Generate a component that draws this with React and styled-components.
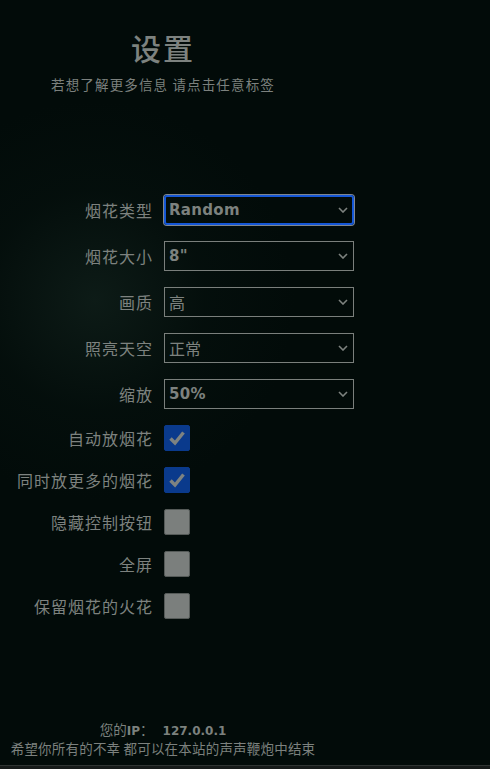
import React from "react";
import styled, { createGlobalStyle, css } from "styled-components";

const GlobalStyle = createGlobalStyle`
  html, body {
    margin: 0;
    padding: 0;
    background: #020b09;
  }
  body {
    font-family: "Noto Sans CJK SC", "Noto Sans", sans-serif;
    color: #7c817e;
  }
`;

const Page = styled.div`
  height: 765px;
  display: flex;
  flex-direction: column;
  background:
    radial-gradient(circle at 95px 300px, rgba(22, 40, 34, 0.55) 0, rgba(10, 24, 20, 0.25) 110px, rgba(2, 11, 9, 0) 200px),
    #020b09;
`;

const Header = styled.header`
  width: 326px;
  text-align: center;
  padding-top: 26px;
`;

const Title = styled.h1`
  margin: 0;
  font-size: 30px;
  line-height: 42px;
  font-weight: 500;
  letter-spacing: 2px;
  color: #7d827f;
`;

const Subtitle = styled.p`
  margin: 6px 0 0;
  font-size: 13.5px;
  line-height: 20px;
  letter-spacing: 1.15px;
  color: #7c817e;
`;

const Form = styled.div`
  display: flex;
  flex-direction: column;
  gap: 16px;
  margin-top: 101px;
`;

const Row = styled.div`
  display: grid;
  grid-template-columns: 153px 190px;
  column-gap: 11px;
  align-items: center;
`;

const Label = styled.label`
  text-align: right;
  font-size: 16px;
  letter-spacing: 1px;
  color: #7d827f;
  white-space: nowrap;
`;

const SelectWrap = styled.div`
  position: relative;
  width: 190px;
  height: 30px;
`;

const Select = styled.select`
  appearance: none;
  -webkit-appearance: none;
  box-sizing: border-box;
  width: 100%;
  height: 100%;
  margin: 0;
  padding: 0 22px 0 4px;
  background: transparent;
  color: #7d827f;
  border: 1px solid #7a7f7c;
  border-radius: 0;
  font-family: ${(p) => (p.$latin ? '"DejaVu Sans", "Noto Sans CJK SC", sans-serif' : '"Noto Sans CJK SC", sans-serif')};
  font-weight: ${(p) => (p.$latin ? 700 : 400)};
  font-size: ${(p) => (p.$latin ? "15px" : "16px")};
  letter-spacing: ${(p) => (p.$latin ? "0.3px" : "0")};
  outline: none;
  ${(p) =>
    p.$focused &&
    css`
      border: 2px solid #1557d6;
      border-radius: 3px;
      padding-left: 3px;
      box-shadow: 0 0 0 1px rgba(230, 236, 255, 0.55);
    `}
`;

const Chevron = styled.svg`
  position: absolute;
  right: 6px;
  top: 50%;
  width: 10px;
  height: 6px;
  margin-top: -3px;
  pointer-events: none;
`;

const Box = styled.span`
  box-sizing: border-box;
  width: 26px;
  height: 26px;
  border-radius: 2px;
  display: flex;
  align-items: center;
  justify-content: center;
  background: ${(p) => (p.$checked ? "#0a3a8c" : "#7b7f7d")};
  border: 1px solid ${(p) => (p.$checked ? "#0a3a8c" : "#555a58")};
`;

const Footer = styled.footer`
  margin-top: auto;
  width: 326px;
  text-align: center;
  padding-bottom: 8px;
  font-size: 13.5px;
  line-height: 17px;
  color: #7c817e;
`;

const FooterLine = styled.div`
  letter-spacing: ${(p) => p.$spacing || "0"};
  white-space: nowrap;
`;

const Strong = styled.span`
  font-family: "DejaVu Sans", sans-serif;
  font-weight: 700;
  font-size: 12px;
`;

const BottomBar = styled.div`
  height: 4px;
  border-top: 1px solid #2f3432;
  background: #161a19;
`;

const selects = [
  { label: "烟花类型", value: "Random", latin: true, focused: true, options: ["Random", "Crysanthemum", "Palm", "Ring", "Strobe"] },
  { label: "烟花大小", value: '8"', latin: true, options: ['3"', '4"', '6"', '8"', '12"', '16"'] },
  { label: "画质", value: "高", options: ["低", "正常", "高"] },
  { label: "照亮天空", value: "正常", options: ["无", "暗", "正常"] },
  { label: "缩放", value: "50%", latin: true, options: ["50%", "62%", "75%", "90%", "100%"] },
];

const checks = [
  { label: "自动放烟花", checked: true },
  { label: "同时放更多的烟花", checked: true },
  { label: "隐藏控制按钮", checked: false },
  { label: "全屏", checked: false },
  { label: "保留烟花的火花", checked: false },
];

function Check({ checked }) {
  return (
    <Box $checked={checked}>
      {checked && (
        <svg width="20" height="20" viewBox="0 0 20 20">
          <path d="M3.5 10.5 L8 15 L16.5 4.5" fill="none" stroke="#7e8381" strokeWidth="3.4" strokeLinecap="butt" strokeLinejoin="miter" />
        </svg>
      )}
    </Box>
  );
}

export default function App() {
  return (
    <>
      <GlobalStyle />
      <Page>
        <Header>
          <Title>设置</Title>
          <Subtitle>若想了解更多信息 请点击任意标签</Subtitle>
        </Header>
        <Form>
          {selects.map((s) => (
            <Row key={s.label}>
              <Label>{s.label}</Label>
              <SelectWrap>
                <Select defaultValue={s.value} $latin={s.latin} $focused={s.focused}>
                  {s.options.map((o) => (
                    <option key={o} value={o}>
                      {o}
                    </option>
                  ))}
                </Select>
                <Chevron viewBox="0 0 10 6">
                  <path d="M1 1 L5 5 L9 1" fill="none" stroke="#7d827f" strokeWidth="1.6" />
                </Chevron>
              </SelectWrap>
            </Row>
          ))}
          {checks.map((c) => (
            <Row key={c.label}>
              <Label>{c.label}</Label>
              <Check checked={c.checked} />
            </Row>
          ))}
        </Form>
        <Footer>
          <FooterLine>
            您的<Strong>IP</Strong>：&nbsp;&nbsp; <Strong>127.0.0.1</Strong>
          </FooterLine>
          <FooterLine $spacing="0.2px">希望你所有的不幸 都可以在本站的声声鞭炮中结束</FooterLine>
        </Footer>
      </Page>
      <BottomBar />
    </>
  );
}
